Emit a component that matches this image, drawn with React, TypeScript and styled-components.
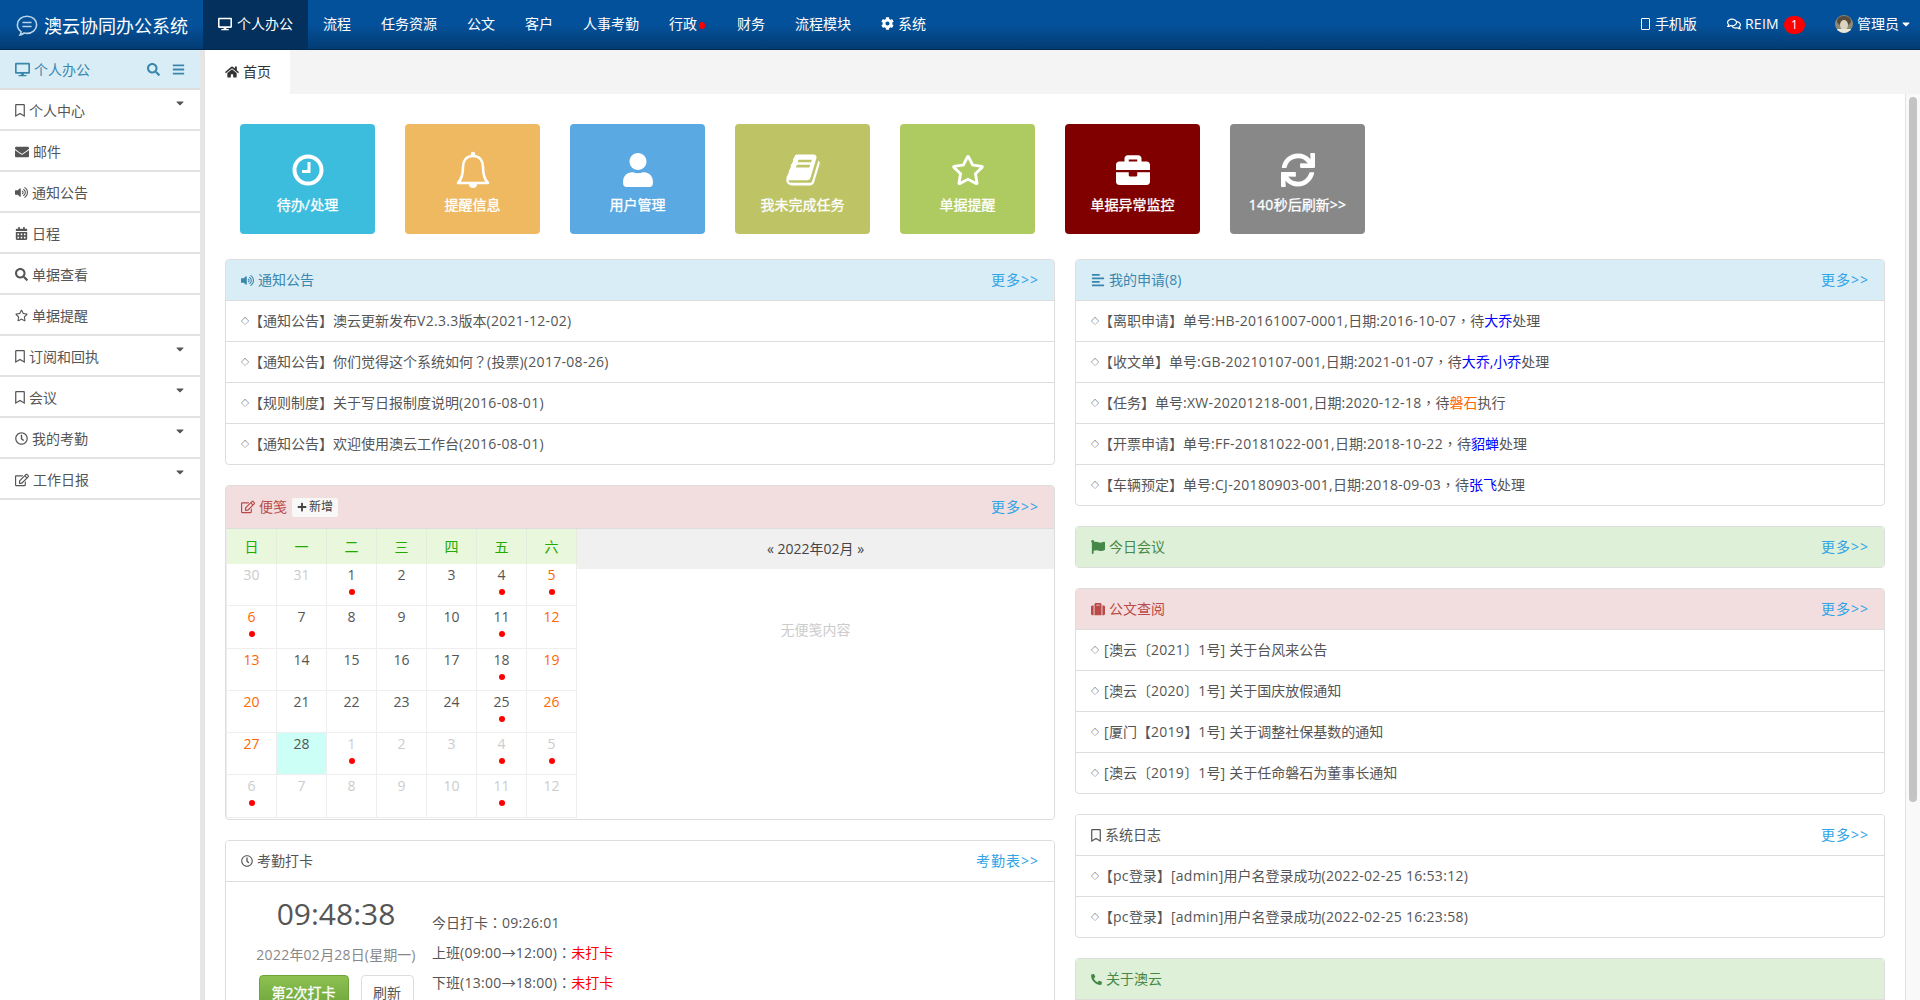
import React from 'react'

import {
    FaAlignLeft,
    FaBars,
    FaBriefcase,
    FaCalendarAlt,
    FaCaretDown,
    FaCog,
    FaDesktop,
    FaEnvelope,
    FaFlag,
    FaHome,
    FaPhoneAlt,
    FaPlus,
    FaRegBookmark,
    FaRegClock,
    FaRegComments,
    FaRegEdit,
    FaRegStar,
    FaSearch,
    FaSuitcase,
    FaSync,
    FaUser,
    FaVolumeUp,
} from 'react-icons/fa'
import styled, { createGlobalStyle } from 'styled-components'

const GlobalStyle = createGlobalStyle`
    html, body {
        margin: 0;
        height: 100%;
        overflow: hidden;
    }
    body {
        font-family: "Open Sans", "Noto Sans CJK SC", sans-serif;
        font-size: 14px;
        line-height: 20px;
        color: #555;
    }
    * {
        box-sizing: border-box;
    }
`

const Shell = styled.div`
    display: flex;
    flex-direction: column;
    height: 100vh;
`

const TopBar = styled.header`
    display: flex;
    align-items: stretch;
    flex: 0 0 50px;
    height: 50px;
    color: #fff;
    background: linear-gradient(#04519b, #04519b 50%, #033c73);
    border-bottom: 1px solid #02294f;
`

const Brand = styled.div`
    display: flex;
    align-items: center;
    gap: 6px;
    width: 203px;
    padding: 2px 0 0 16px;
    font-size: 18px;
`

const NavItem = styled.div<{ $active?: boolean }>`
    display: flex;
    align-items: center;
    gap: ${(p) => (p.$active ? '5px' : '4px')};
    padding: 0 15px 2px;
    background: ${(p) => (p.$active ? '#03305c' : 'transparent')};
`

const NavDot = styled.span`
    width: 6px;
    height: 7px;
    margin: 3px 2px 0 -2px;
    border-radius: 50%;
    background: #f00;
`

const NavRight = styled.div`
    display: flex;
    align-items: center;
    margin-left: auto;
    padding-right: 8px;
    padding-bottom: 2px;
`

const NavLink = styled.div`
    display: flex;
    align-items: center;
    gap: 4px;
    margin-left: 30px;
`

const PhoneMark = styled.span`
    width: 9px;
    height: 12px;
    margin-right: 1px;
    border: 1px solid #fff;
    border-radius: 1px;
`

const Badge = styled.span`
    width: 21px;
    height: 18px;
    margin-left: 1px;
    margin-top: 2px;
    border-radius: 9px;
    background: #f00;
    color: #fff;
    font-size: 12px;
    line-height: 18px;
    text-align: center;
`

const Layout = styled.div`
    display: flex;
    flex: 1;
    min-height: 0;
`

const Sidebar = styled.aside`
    flex: 0 0 205px;
    border-right: 5px solid #e5e5e5;
    background: #fff;
`

const SideHead = styled.div`
    display: flex;
    align-items: center;
    height: 40px;
    padding: 1px 15px 0;
    gap: 4px;
    background: #d9edf7;
    color: #3a87ad;
    border-bottom: 2px solid #ddd;
`

const SideTools = styled.div`
    display: flex;
    align-items: center;
    gap: 12px;
    margin-left: auto;
`

const SideRow = styled.div`
    position: relative;
    display: flex;
    align-items: center;
    gap: 4px;
    height: 41px;
    padding: 2px 15px 0;
    border-bottom: 2px solid #e2e2e2;
    color: #555;
`

const SideCaret = styled.span`
    position: absolute;
    right: 14px;
    top: 7px;
    color: #555;
    font-size: 12px;
    line-height: 12px;
`

const BookmarkIcon = styled(FaRegBookmark)`
    width: 10px;
    height: 13px;
`

const Main = styled.main`
    display: flex;
    flex-direction: column;
    flex: 1;
    min-width: 0;
`

const TabBar = styled.div`
    flex: 0 0 44px;
    height: 44px;
    background: #f4f4f4;
`

const Tab = styled.div`
    display: flex;
    align-items: center;
    gap: 4px;
    width: 85px;
    height: 44px;
    padding-left: 20px;
    background: #fff;
    color: #333;
`

const ScrollWrap = styled.div`
    display: flex;
    flex: 1;
    min-height: 0;
`

const Scroller = styled.div`
    flex: 1;
    min-width: 0;
    overflow: hidden;
    padding: 30px 20px 0;
    background: #fff;
`

const ScrollRail = styled.div`
    flex: 0 0 15px;
    padding: 3px 3px 0 3px;
    background: #f9f9f9;
    border-left: 1px solid #e2e2e2;
`

const ScrollThumb = styled.div`
    height: 705px;
    border-radius: 4px;
    background: #c4c4c4;
`

const TileRow = styled.div`
    display: flex;
    gap: 30px;
    padding-left: 15px;
    margin-bottom: 25px;
`

const Tile = styled.div<{ $bg: string }>`
    display: flex;
    flex-direction: column;
    align-items: center;
    width: 135px;
    height: 110px;
    padding-top: 28px;
    border-radius: 4px;
    background: ${(p) => p.$bg};
    color: #fff;
    -webkit-text-stroke: 0.3px #fff;
`

const TileIcon = styled.div`
    display: flex;
    align-items: center;
    justify-content: center;
    height: 36px;
    margin-bottom: 7px;
    font-size: 34px;
`

const Columns = styled.div`
    display: grid;
    grid-template-columns: 830px 810px;
    column-gap: 20px;
    align-items: start;
`

const Column = styled.div`
    display: flex;
    flex-direction: column;
    gap: 20px;
`

const PanelBox = styled.section`
    border: 1px solid #ddd;
    border-radius: 4px;
    overflow: hidden;
`

const TONES = {
    info: { bg: '#d9edf7', fg: '#3a87ad' },
    danger: { bg: '#f2dede', fg: '#b94a48' },
    success: { bg: '#dff0d8', fg: '#468847' },
    plain: { bg: '#fff', fg: '#555' },
}

type Tone = keyof typeof TONES

const PanelHead = styled.div<{ $tone: Tone; $tall?: boolean; $bare?: boolean }>`
    display: flex;
    align-items: center;
    gap: 4px;
    height: ${(p) => (p.$tall ? '43px' : p.$bare ? '40px' : '41px')};
    padding: 0 15px;
    background: ${(p) => TONES[p.$tone].bg};
    color: ${(p) => TONES[p.$tone].fg};
    border-bottom: ${(p) => (p.$bare ? 'none' : '1px solid #ddd')};
`

const More = styled.a`
    margin-left: auto;
    color: #2fa4e7;
    letter-spacing: 1px;
`

const AddNote = styled.span`
    display: flex;
    align-items: center;
    gap: 2px;
    height: 19px;
    margin-left: 1px;
    padding: 0 5px;
    border-radius: 2px;
    background: #f8f8f8;
    color: #444;
    font-size: 12px;
`

const Row = styled.div`
    display: flex;
    align-items: center;
    height: 41px;
    padding: 0 15px;
    border-bottom: 1px solid #ddd;
    color: #555;

    &:last-child {
        border-bottom: none;
        height: 40px;
    }
`

const Diamond = styled.span<{ $wide?: boolean }>`
    flex: 0 0 ${(p) => (p.$wide ? '13px' : '8px')};
    overflow: visible;
    color: #111;
    font-size: 8px;
    line-height: 20px;
`

const Latin = styled.span`
    letter-spacing: 0.3px;
`

const Punct = styled.span`
    font-family: "Noto Sans CJK TC", sans-serif;
    line-height: 1;
`

const Who = styled.span<{ $orange?: boolean }>`
    color: ${(p) => (p.$orange ? '#ff6600' : '#0000ff')};
`

const NoteBody = styled.div`
    display: flex;
    height: 290px;
`

const Calendar = styled.div`
    display: grid;
    flex: 0 0 351px;
    grid-template-columns: repeat(7, 50px);
    grid-template-rows: 35px repeat(6, 42.3px);
    border-left: 1px solid #eee;
`

const WeekDay = styled.div`
    display: flex;
    align-items: center;
    justify-content: center;
    background: #e9f7dc;
    border-right: 1px solid #e4ecdc;
    color: #22aa00;
    font-size: 14px;
`

const DayCell = styled.div<{ $color: string; $today?: boolean }>`
    display: flex;
    flex-direction: column;
    align-items: center;
    padding-top: 1px;
    border-right: 1px solid #eee;
    border-bottom: 1px solid #eee;
    background: ${(p) => (p.$today ? '#ccfff5' : '#fff')};
    color: ${(p) => p.$color};
`

const DayDot = styled.span`
    width: 6px;
    height: 6px;
    margin-top: 4px;
    border-radius: 50%;
    background: #f00;
`

const NotePane = styled.div`
    display: flex;
    flex-direction: column;
    flex: 1;
`

const MonthBar = styled.div`
    display: flex;
    align-items: center;
    justify-content: center;
    height: 40px;
    background: #f0f0f0;
    color: #444;
`

const EmptyNote = styled.div`
    padding-top: 51px;
    color: #ccc;
    text-align: center;
`

const ClockBody = styled.div`
    display: flex;
    gap: 10px;
    padding: 12px 0 12px 24px;
`

const ClockLeft = styled.div`
    display: flex;
    flex-direction: column;
    align-items: center;
    width: 172px;
`

const ClockTime = styled.div`
    font-size: 30px;
    line-height: 40px;
    color: #555;
`

const ClockDate = styled.div`
    margin-top: 11px;
    color: #888;
    white-space: nowrap;
`

const ClockButtons = styled.div`
    display: flex;
    gap: 12px;
    margin-top: 10px;
`

const PunchButton = styled.div`
    width: 90px;
    height: 34px;
    border: 1px solid #6da53a;
    border-radius: 4px;
    background: linear-gradient(#8cc152, #6da53a);
    color: #fff;
    -webkit-text-stroke: 0.3px #fff;
    line-height: 34px;
    text-align: center;
`

const RefreshButton = styled.div`
    width: 53px;
    height: 34px;
    border: 1px solid #ddd;
    border-radius: 4px;
    background: #fff;
    color: #555;
    line-height: 34px;
    text-align: center;
`

const ClockLines = styled.div`
    padding-top: 14px;
    line-height: 30px;
    color: #555;
`

const Late = styled.span`
    color: #f00;
`

const AboutBody = styled.div`
    height: 40px;
`

const BrandIcon = () => (
    <svg width="22" height="21" viewBox="0 0 22 21" fill="none" stroke="#b9d2e8" strokeWidth="1.6">
        <path d="M11 1.2c5.4 0 9.6 3.7 9.6 8.6S16.4 18.4 11 18.4c-1 0-2-.1-2.9-.4-1.300 1-2.500 1.700-4 1.900 .6-1 1-2 1-3.200C2.800 15.200 1.400 12.700 1.400 9.800 1.400 4.900 5.600 1.200 11 1.200z" />
        <path d="M7 7.500h8M7 11.500h8" strokeLinecap="round" />
    </svg>
)

const Avatar = () => (
    <svg width="18" height="18" viewBox="0 0 18 18">
        <defs>
            <clipPath id="avatarClip">
                <circle cx="9" cy="9" r="9" />
            </clipPath>
        </defs>
        <g clipPath="url(#avatarClip)">
            <rect width="18" height="18" fill="#8d8a78" />
            <ellipse cx="9" cy="6" rx="7" ry="5" fill="#5a4c3a" />
            <ellipse cx="9" cy="10" rx="4" ry="5" fill="#d9d3c0" />
            <rect x="2" y="14" width="14" height="5" fill="#e8e6da" />
        </g>
    </svg>
)

const ClockGlyph = () => (
    <svg width="32" height="32" viewBox="0 0 32 32" fill="none" stroke="#fff">
        <circle cx="16" cy="16" r="13.500" strokeWidth="4" />
        <path d="M17 8v9.500h-7" strokeWidth="3" />
    </svg>
)

const BellGlyph = () => (
    <svg width="34" height="38" viewBox="0 0 34 38" fill="none" stroke="#fff">
        <path d="M17 5c-7 0-10 5-10 11 0 8-1 12-5 16h30c-4-4-5-8-5-16 0-6-3-11-10-11z" strokeWidth="2.600" strokeLinejoin="round" />
        <circle cx="17" cy="3" r="2.200" fill="#fff" stroke="none" />
        <path d="M13 33a4 4 0 0 0 8 0z" fill="#fff" stroke="none" />
    </svg>
)

const BookGlyph = () => (
    <svg width="34" height="36" viewBox="0 0 1664 1792" fill="#fff">
        <path d="M1639 478q40 57 18 129l-275 906q-19 64-76.500 107.500t-122.500 43.500h-923q-77 0-148.500-53.500t-99.500-131.500q-24-67-2-127 0-4 3-27t4-37q1-8-3-21.500t-3-19.500q2-11 8-21t16.500-23.500 16.500-23.500q23-38 45-91.500t30-91.500q3-10 .5-30t-.5-28q3-11 17-28t17-23q21-36 42-92t25-90q1-9-2.500-32t.5-28q4-13 22-30.500t22-22.500q19-26 42.500-84.500t27.500-96.500q1-8-3-25.500t-2-26.500q2-8 9-18t18-23 17-21q8-12 16.500-30.500t15-35 16-36 19.500-32 26.500-23.500 36-11.500 47.500 5.500l-1 3q38-9 51-9h761q74 0 114 56t18 130l-274 906q-36 119-71.500 153.500t-128.500 34.500h-869q-27 0-38 15-11 16-1 43 24 70 144 70h923q29 0 56-15.500t35-41.500l300-987q7-22 5-57 38 15 59 43zm-1064 2q-4 13 2 22.500t20 9.500h608q13 0 25.500-9.500t16.500-22.500l21-64q4-13-2-22.500t-20-9.500h-608q-13 0-25.500 9.500t-16.500 22.500zm-83 256q-4 13 2 22.500t20 9.500h608q13 0 25.500-9.500t16.500-22.500l21-64q4-13-2-22.500t-20-9.500h-608q-13 0-25.500 9.500t-16.500 22.500z" />
    </svg>
)

const NAV_ITEMS = ['流程', '任务资源', '公文', '客户', '人事考勤', '行政', '财务', '流程模块']

const SIDE_ITEMS = [
    { icon: <BookmarkIcon />, text: '个人中心', caret: true },
    { icon: <FaEnvelope size={14} />, text: '邮件' },
    { icon: <FaVolumeUp size={13} />, text: '通知公告' },
    { icon: <FaCalendarAlt size={13} />, text: '日程' },
    { icon: <FaSearch size={13} />, text: '单据查看' },
    { icon: <FaRegStar size={13} />, text: '单据提醒' },
    { icon: <BookmarkIcon />, text: '订阅和回执', caret: true },
    { icon: <BookmarkIcon />, text: '会议', caret: true },
    { icon: <FaRegClock size={13} />, text: '我的考勤', caret: true },
    { icon: <FaRegEdit size={14} />, text: '工作日报', caret: true },
]

const TILES = [
    { bg: '#3dbddd', icon: <ClockGlyph />, text: '待办/处理' },
    { bg: '#efb961', icon: <BellGlyph />, text: '提醒信息' },
    { bg: '#5aa9e2', icon: <FaUser />, text: '用户管理' },
    { bg: '#bec465', icon: <BookGlyph />, text: '我未完成任务' },
    { bg: '#aecb62', icon: <FaRegStar />, text: '单据提醒' },
    { bg: '#800000', icon: <FaBriefcase />, text: '单据异常监控' },
    { bg: '#888888', icon: <FaSync />, text: '140秒后刷新>>' },
]

const NOTICES = [
    '【通知公告】澳云更新发布V2.3.3版本(2021-12-02)',
    '【通知公告】你们觉得这个系统如何？(投票)(2017-08-26)',
    '【规则制度】关于写日报制度说明(2016-08-01)',
    '【通知公告】欢迎使用澳云工作台(2016-08-01)',
]

const APPLIES = [
    { text: '【离职申请】单号:HB-20161007-0001,日期:2016-10-07，待', name: '大乔', end: '处理' },
    { text: '【收文单】单号:GB-20210107-001,日期:2021-01-07，待', name: '大乔,小乔', end: '处理' },
    { text: '【任务】单号:XW-20201218-001,日期:2020-12-18，待', name: '磐石', end: '执行', orange: true },
    { text: '【开票申请】单号:FF-20181022-001,日期:2018-10-22，待', name: '貂蝉', end: '处理' },
    { text: '【车辆预定】单号:CJ-20180903-001,日期:2018-09-03，待', name: '张飞', end: '处理' },
]

const DOCS = [
    '[澳云〔2021〕1号] 关于台风来公告',
    '[澳云〔2020〕1号] 关于国庆放假通知',
    '[厦门【2019】1号] 关于调整社保基数的通知',
    '[澳云〔2019〕1号] 关于任命磐石为董事长通知',
]

const LOGS = [
    '【pc登录】[admin]用户名登录成功(2022-02-25 16:53:12)',
    '【pc登录】[admin]用户名登录成功(2022-02-25 16:23:58)',
]

const WEEK = ['日', '一', '二', '三', '四', '五', '六']

// 日历数据: [数字, 是否本月, 是否有红点]
const DAYS: [number, boolean, boolean][] = [
    [30, false, false], [31, false, false], [1, true, true], [2, true, false], [3, true, false], [4, true, true], [5, true, true],
    [6, true, true], [7, true, false], [8, true, false], [9, true, false], [10, true, false], [11, true, true], [12, true, false],
    [13, true, false], [14, true, false], [15, true, false], [16, true, false], [17, true, false], [18, true, true], [19, true, false],
    [20, true, false], [21, true, false], [22, true, false], [23, true, false], [24, true, false], [25, true, true], [26, true, false],
    [27, true, false], [28, true, false], [1, false, true], [2, false, false], [3, false, false], [4, false, true], [5, false, true],
    [6, false, true], [7, false, false], [8, false, false], [9, false, false], [10, false, false], [11, false, true], [12, false, false],
]

const dayColor = (index: number, current: boolean) => {
    if (!current) return '#ccc'
    return index % 7 === 0 || index % 7 === 6 ? '#ff6600' : '#555'
}

// 拉丁字符稍微拉开，全角标点用居中的字形
const mix = (text: string) =>
    text.split(/([\x20-\x7e]+|[，：？])/).map((part, i) => {
        if (!part) return null
        if (/^[，：？]$/.test(part)) return <Punct key={i}>{part}</Punct>
        if (/^[\x20-\x7e]+$/.test(part)) return <Latin key={i}>{part}</Latin>
        return part
    })

const ListRow: React.FC<{ wide?: boolean; children: React.ReactNode }> = ({ wide, children }) => (
    <Row>
        <Diamond $wide={wide}>◇</Diamond>
        <span>{children}</span>
    </Row>
)

const App: React.FC = () => {
    return (
        <Shell>
            <GlobalStyle />
            <TopBar>
                <Brand>
                    <BrandIcon />
                    澳云协同办公系统
                </Brand>
                <NavItem $active>
                    <FaDesktop size={14} />
                    个人办公
                </NavItem>
                {NAV_ITEMS.map((item) => (
                    <NavItem key={item}>
                        {item}
                        {item === '行政' && <NavDot />}
                    </NavItem>
                ))}
                <NavItem>
                    <FaCog size={13} />
                    系统
                </NavItem>
                <NavRight>
                    <NavLink>
                        <PhoneMark />
                        手机版
                    </NavLink>
                    <NavLink>
                        <FaRegComments size={14} />
                        <Latin>REIM</Latin>
                        <Badge>1</Badge>
                    </NavLink>
                    <NavLink>
                        <Avatar />
                        <span>管理员</span>
                        <FaCaretDown size={12} style={{ marginLeft: -3 }} />
                    </NavLink>
                </NavRight>
            </TopBar>
            <Layout>
                <Sidebar>
                    <SideHead>
                        <FaDesktop size={15} />
                        个人办公
                        <SideTools>
                            <FaSearch size={13} />
                            <FaBars size={13} />
                        </SideTools>
                    </SideHead>
                    {SIDE_ITEMS.map((item) => (
                        <SideRow key={item.text}>
                            {item.icon}
                            {item.text}
                            {item.caret && (
                                <SideCaret>
                                    <FaCaretDown />
                                </SideCaret>
                            )}
                        </SideRow>
                    ))}
                </Sidebar>
                <Main>
                    <TabBar>
                        <Tab>
                            <FaHome size={14} />
                            首页
                        </Tab>
                    </TabBar>
                    <ScrollWrap>
                        <Scroller>
                            <TileRow>
                                {TILES.map((tile) => (
                                    <Tile key={tile.text} $bg={tile.bg}>
                                        <TileIcon>{tile.icon}</TileIcon>
                                        <div>{mix(tile.text)}</div>
                                    </Tile>
                                ))}
                            </TileRow>
                            <Columns>
                                <Column>
                                    <PanelBox>
                                        <PanelHead $tone="info">
                                            <FaVolumeUp size={13} />
                                            通知公告
                                            <More>更多&gt;&gt;</More>
                                        </PanelHead>
                                        {NOTICES.map((text) => (
                                            <ListRow key={text}>{mix(text)}</ListRow>
                                        ))}
                                    </PanelBox>
                                    <PanelBox>
                                        <PanelHead $tone="danger" $tall>
                                            <FaRegEdit size={14} />
                                            便笺
                                            <AddNote>
                                                <FaPlus size={10} />
                                                新增
                                            </AddNote>
                                            <More>更多&gt;&gt;</More>
                                        </PanelHead>
                                        <NoteBody>
                                            <Calendar>
                                                {WEEK.map((day) => (
                                                    <WeekDay key={day}>{day}</WeekDay>
                                                ))}
                                                {DAYS.map(([num, current, dot], index) => (
                                                    <DayCell
                                                        key={index}
                                                        $color={dayColor(index, current)}
                                                        $today={current && num === 28}
                                                    >
                                                        {num}
                                                        {dot && <DayDot />}
                                                    </DayCell>
                                                ))}
                                            </Calendar>
                                            <NotePane>
                                                <MonthBar>« 2022年02月 »</MonthBar>
                                                <EmptyNote>无便笺内容</EmptyNote>
                                            </NotePane>
                                        </NoteBody>
                                    </PanelBox>
                                    <PanelBox>
                                        <PanelHead $tone="plain">
                                            <FaRegClock size={12} />
                                            考勤打卡
                                            <More>考勤表&gt;&gt;</More>
                                        </PanelHead>
                                        <ClockBody>
                                            <ClockLeft>
                                                <ClockTime>09:48:38</ClockTime>
                                                <ClockDate>{mix('2022年02月28日(星期一)')}</ClockDate>
                                                <ClockButtons>
                                                    <PunchButton>第2次打卡</PunchButton>
                                                    <RefreshButton>刷新</RefreshButton>
                                                </ClockButtons>
                                            </ClockLeft>
                                            <ClockLines>
                                                <div>{mix('今日打卡：09:26:01')}</div>
                                                <div>
                                                    {mix('上班(09:00→12:00)：')}
                                                    <Late>未打卡</Late>
                                                </div>
                                                <div>
                                                    {mix('下班(13:00→18:00)：')}
                                                    <Late>未打卡</Late>
                                                </div>
                                            </ClockLines>
                                        </ClockBody>
                                    </PanelBox>
                                </Column>
                                <Column>
                                    <PanelBox>
                                        <PanelHead $tone="info">
                                            <FaAlignLeft size={14} />
                                            我的申请(8)
                                            <More>更多&gt;&gt;</More>
                                        </PanelHead>
                                        {APPLIES.map((item) => (
                                            <ListRow key={item.text}>
                                                {mix(item.text)}
                                                <Who $orange={item.orange}>{item.name}</Who>
                                                {item.end}
                                            </ListRow>
                                        ))}
                                    </PanelBox>
                                    <PanelBox>
                                        <PanelHead $tone="success" $bare>
                                            <FaFlag size={14} />
                                            今日会议
                                            <More>更多&gt;&gt;</More>
                                        </PanelHead>
                                    </PanelBox>
                                    <PanelBox>
                                        <PanelHead $tone="danger">
                                            <FaSuitcase size={14} />
                                            公文查阅
                                            <More>更多&gt;&gt;</More>
                                        </PanelHead>
                                        {DOCS.map((text) => (
                                            <ListRow key={text} wide>
                                                {mix(text)}
                                            </ListRow>
                                        ))}
                                    </PanelBox>
                                    <PanelBox>
                                        <PanelHead $tone="plain">
                                            <BookmarkIcon />
                                            系统日志
                                            <More>更多&gt;&gt;</More>
                                        </PanelHead>
                                        {LOGS.map((text) => (
                                            <ListRow key={text}>{mix(text)}</ListRow>
                                        ))}
                                    </PanelBox>
                                    <PanelBox>
                                        <PanelHead $tone="success">
                                            <FaPhoneAlt size={11} />
                                            关于澳云
                                        </PanelHead>
                                        <AboutBody />
                                    </PanelBox>
                                </Column>
                            </Columns>
                        </Scroller>
                        <ScrollRail>
                            <ScrollThumb />
                        </ScrollRail>
                    </ScrollWrap>
                </Main>
            </Layout>
        </Shell>
    )
}

export default App
